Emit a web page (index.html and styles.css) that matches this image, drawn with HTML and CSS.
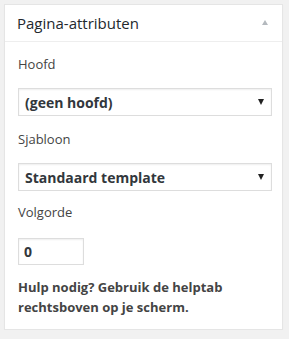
FILE: index.html
```html
<!DOCTYPE html>
<html lang="nl">
<head>
    <meta charset="UTF-8">
    <meta name="viewport" content="width=device-width, initial-scale=1.0">
    <title>Pagina-attributen</title>
    <link rel="stylesheet" href="styles.css">
</head>
<body>
    <div class="postbox">
        <div class="postbox-header">
            <h2>Pagina-attributen</h2>
            <span class="toggle-arrow"></span>
        </div>
        <div class="inside">
            <p class="field-label field-label-first">Hoofd</p>
            <div class="select-wrap">
                <select name="parent_id">
                    <option value="">(geen hoofd)</option>
                </select>
            </div>

            <p class="field-label">Sjabloon</p>
            <div class="select-wrap">
                <select name="page_template">
                    <option value="default">Standaard template</option>
                </select>
            </div>

            <p class="field-label field-label-order">Volgorde</p>
            <input type="text" class="order-input" name="menu_order" value="0">

            <p class="help-text">Hulp nodig? Gebruik de helptab rechtsboven op je scherm.</p>
        </div>
    </div>
</body>
</html>
```

FILE: styles.css
```css
body {
    font-family: "Open Sans", "Liberation Sans", sans-serif;
    background-color: #f1f1f1;
    margin: 0;
    padding: 4px 6px 0 4px;
    color: #444;
}

.postbox {
    background-color: #fff;
    border: 1px solid #e5e5e5;
    box-shadow: 0 1px 1px rgba(0, 0, 0, 0.04);
    width: 277px;
}

.postbox-header {
    display: flex;
    align-items: center;
    justify-content: space-between;
    padding: 8px 14px 8px 12px;
    border-bottom: 1px solid #eee;
}

.postbox-header h2 {
    margin: 0;
    font-size: 15px;
    font-weight: 400;
    line-height: 20px;
    color: #23282d;
}

.toggle-arrow {
    width: 0;
    height: 0;
    border-left: 3.5px solid transparent;
    border-right: 3.5px solid transparent;
    border-bottom: 5px solid #b4b9be;
    margin-top: -1px;
}

.inside {
    padding: 0 10px 12px 13px;
}

.field-label {
    margin: 13px 0 14px;
    font-size: 13px;
    line-height: 20px;
    color: #444;
}

.field-label-first {
    margin-top: 12px;
}

.field-label-order {
    margin-top: 11px;
    margin-bottom: 16px;
}

.select-wrap {
    position: relative;
    width: 254px;
}

.select-wrap::after {
    content: "";
    position: absolute;
    right: 8px;
    top: 11px;
    border-left: 3.5px solid transparent;
    border-right: 3.5px solid transparent;
    border-top: 6px solid #222;
    pointer-events: none;
}

select {
    -webkit-appearance: none;
    appearance: none;
    display: block;
    width: 100%;
    height: 28px;
    margin: 0;
    padding: 0 20px 0 6px;
    border: 1px solid #ddd;
    border-radius: 0;
    box-shadow: inset 0 1px 2px rgba(0, 0, 0, 0.07);
    background-color: #fff;
    font-family: inherit;
    font-size: 14px;
    font-weight: 700;
    color: #32373c;
}

.order-input {
    display: block;
    box-sizing: border-box;
    width: 66px;
    height: 27px;
    margin: 0;
    padding: 0 5px;
    border: 1px solid #ddd;
    box-shadow: inset 0 1px 2px rgba(0, 0, 0, 0.07);
    font-family: inherit;
    font-size: 14px;
    font-weight: 700;
    color: #32373c;
}

.help-text {
    margin: 12px 0 0;
    font-size: 13px;
    font-weight: 700;
    line-height: 20px;
    color: #444;
}
```
